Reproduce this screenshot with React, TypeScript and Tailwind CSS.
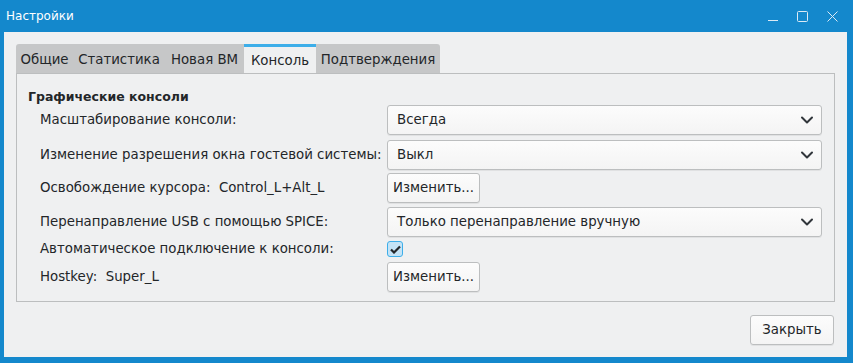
import { ChevronDown } from "lucide-react";

const font = { fontFamily: '"DejaVu Sans", "Noto Sans", sans-serif' };

const tabs = [
  { t: "Общие", w: "w-[57px]" },
  { t: "Статистика", w: "w-[92px]" },
  { t: "Новая ВМ", w: "w-[79px]" },
  { t: "Консоль", w: "w-[72px]" },
  { t: "Подтверждения", w: "w-[124px]" },
];

const Combo = ({ value }: { value: string }) => (
  <div className="flex h-[30px] w-[435px] items-center justify-between rounded-[3px] border border-[#bcbebf] bg-gradient-to-b from-[#fcfcfc] to-[#f4f4f4] pl-[9px] pr-[4px] shadow-[0_1px_0_rgba(0,0,0,0.06)]">
    <span>{value}</span>
    <ChevronDown size={20} strokeWidth={2.4} className="text-[#31363b]" />
  </div>
);

const Btn = ({ label, w }: { label: string; w: string }) => (
  <div
    className={`flex h-[30px] ${w} items-center justify-center rounded-[3px] border border-[#bcbebf] bg-gradient-to-b from-[#fcfcfc] to-[#f4f4f4] shadow-[0_1px_0_rgba(0,0,0,0.06)]`}
  >
    {label}
  </div>
);

const Row = ({ label, mt, h = "h-[30px]", children }: { label: string; mt: string; h?: string; children: React.ReactNode }) => (
  <div className={`flex ${h} ${mt} items-center`}>
    <div className="w-[370px] whitespace-pre pl-[23px]">{label}</div>
    {children}
  </div>
);

const App = () => {
  return (
    <div
      className="flex h-[363px] w-[853px] flex-col bg-[#1488cc] text-[13.33px] text-[#232629]"
      style={font}
    >
      <div className="flex h-[32px] items-center justify-between pl-[6px] text-[12px] text-white">
        <span>Настройки</span>
        <div className="flex items-center gap-[19px] pr-[15px]">
          <svg width="10" height="10" viewBox="0 0 10 10">
            <path d="M0 9.5H10" stroke="#dbeaf5" strokeWidth="1" />
          </svg>
          <svg width="11" height="11" viewBox="0 0 11 11">
            <rect x="0.5" y="0.5" width="10" height="10" rx="1" fill="none" stroke="#dbeaf5" strokeWidth="1" />
          </svg>
          <svg width="11" height="11" viewBox="0 0 11 11">
            <path d="M0.5 0.5L10.5 10.5M10.5 0.5L0.5 10.5" stroke="#dbeaf5" strokeWidth="1" />
          </svg>
        </div>
      </div>

      <div className="mb-[6px] ml-[4px] mr-[6px] flex flex-1 flex-col bg-[#eff0f1] px-[12px] pt-[12px]">
        <div className="flex h-[29px] items-end">
          {tabs.map(({ t, w }, i) => {
            const active = t === "Консоль";
            return (
              <div
                key={t}
                className={`flex h-[29px] ${w} items-center justify-center ${
                  active
                    ? "border-t-[3px] border-[#3daee9] bg-[#eff0f1] pt-[1px]"
                    : "bg-[#c6c7c8] pt-[2px]"
                } ${i === 0 ? "rounded-tl-[3px]" : ""} ${i === tabs.length - 1 ? "rounded-tr-[3px]" : ""}`}
              >
                {t}
              </div>
            );
          })}
        </div>

        <div className="h-[229px] w-[819px] border border-[#bcbebf] pt-[14px]">
          <div className="pl-[11px] text-[12.5px] font-bold leading-[17px]">Графические консоли</div>
          <Row label="Масштабирование консоли:" mt="mt-[0px]">
            <Combo value="Всегда" />
          </Row>
          <Row label="Изменение разрешения окна гостевой системы:" mt="mt-[5px]">
            <Combo value="Выкл" />
          </Row>
          <Row label="Освобождение курсора:  Control_L+Alt_L" mt="mt-[3px]">
            <Btn label="Изменить..." w="w-[93px]" />
          </Row>
          <Row label="Перенаправление USB с помощью SPICE:" mt="mt-[4px]">
            <Combo value="Только перенаправление вручную" />
          </Row>
          <Row label="Автоматическое подключение к консоли:" mt="mt-[4px]" h="h-[16px]">
            <div className="flex h-[16px] w-[16px] items-center justify-center rounded-[3px] border border-[#3daee9] bg-[#c4e3f6]">
              <svg width="11" height="9" viewBox="0 0 11 9">
                <path d="M1 4.5L4 7.5L10 1.5" fill="none" stroke="#232629" strokeWidth="2.2" />
              </svg>
            </div>
          </Row>
          <Row label="Hostkey:  Super_L" mt="mt-[5px]">
            <Btn label="Изменить..." w="w-[93px]" />
          </Row>
        </div>

        <div className="mt-[13px] flex justify-end pr-[1px]">
          <Btn label="Закрыть" w="w-[84px]" />
        </div>
      </div>
    </div>
  );
};

export default App;
